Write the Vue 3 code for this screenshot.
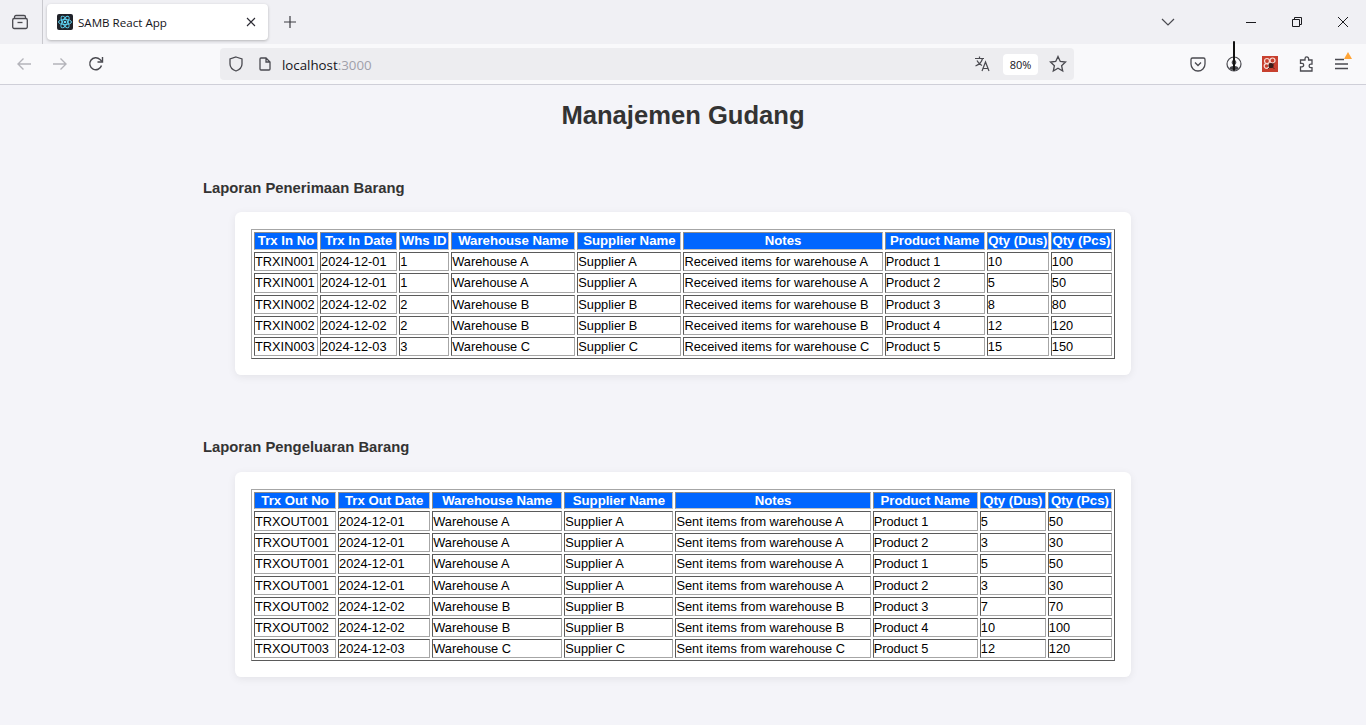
<template>
  <div class="browser">
    <div class="tabbar">
      <div class="tab-view">
        <svg width="18" height="18" viewBox="0 0 18 18" fill="none" stroke="#4a4a50" stroke-width="1.300">
          <path d="M3.500 5.500V4A1.500 1.500 0 0 1 5 2.500h8A1.500 1.500 0 0 1 14.500 4v1.500" />
          <path d="M1.700 7A1.500 1.500 0 0 1 3.200 5.500h11.600A1.500 1.500 0 0 1 16.300 7v7a1.500 1.500 0 0 1-1.500 1.500H3.200A1.500 1.500 0 0 1 1.700 14z" />
          <path d="M6.500 9.500h5" />
        </svg>
      </div>
      <div class="tab">
        <svg class="favicon" width="16" height="16" viewBox="0 0 16 16">
          <rect width="16" height="16" rx="2" fill="#20232a" />
          <g fill="none" stroke="#61dafb" stroke-width="0.9">
            <ellipse cx="8" cy="8" rx="6.500" ry="2.600" />
            <ellipse cx="8" cy="8" rx="6.500" ry="2.600" transform="rotate(60 8 8)" />
            <ellipse cx="8" cy="8" rx="6.500" ry="2.600" transform="rotate(120 8 8)" />
          </g>
          <circle cx="8" cy="8" r="1.300" fill="#61dafb" />
        </svg>
        <span class="tab-title">SAMB React App</span>
        <svg class="tab-close" width="10" height="10" viewBox="0 0 10 10" stroke="#2b2a33" stroke-width="1.100">
          <path d="M1 1l8 8M9 1l-8 8" />
        </svg>
      </div>
      <svg class="new-tab" width="14" height="14" viewBox="0 0 14 14" stroke="#3d3d42" stroke-width="1.200">
        <path d="M7 1v12M1 7h12" />
      </svg>
      <div class="spacer"></div>
      <svg class="tab-list" width="14" height="8" viewBox="0 0 14 8" fill="none" stroke="#4a4a50" stroke-width="1.200">
        <path d="M1 1l6 6 6-6" />
      </svg>
      <div class="win-btn">
        <svg width="10" height="10" viewBox="0 0 10 10" stroke="#1b1b1f" stroke-width="1"><path d="M0 5.500h10" /></svg>
      </div>
      <div class="win-btn">
        <svg width="10" height="10" viewBox="0 0 10 10" fill="none" stroke="#1b1b1f" stroke-width="1">
          <path d="M0.500 2.500h7v7h-7zM2.500 2.500v-2h7v7h-2" />
        </svg>
      </div>
      <div class="win-btn">
        <svg width="10" height="10" viewBox="0 0 10 10" stroke="#1b1b1f" stroke-width="1"><path d="M0 0l10 10M10 0L0 10" /></svg>
      </div>
    </div>

    <div class="toolbar">
      <div class="nav-btns">
        <svg width="16" height="16" viewBox="0 0 16 16" fill="none" stroke="#b4b4ba" stroke-width="1.400">
          <path d="M15 8H2M7.500 2.500L2 8l5.500 5.500" />
        </svg>
        <svg width="16" height="16" viewBox="0 0 16 16" fill="none" stroke="#b4b4ba" stroke-width="1.400">
          <path d="M1 8h13M8.500 2.500L14 8l-5.500 5.500" />
        </svg>
        <svg width="16" height="16" viewBox="0 0 16 16" fill="none" stroke="#4a4a50" stroke-width="1.400">
          <path d="M13.500 9.500A6 6 0 1 1 12 3.500l2 2" />
          <path d="M14.500 1v5h-5" />
        </svg>
      </div>
      <div class="urlbar">
        <svg width="16" height="16" viewBox="0 0 16 16" fill="none" stroke="#4a4a50" stroke-width="1.300">
          <path d="M8 1l6 2v5c0 3.500-2.500 5.700-6 7-3.500-1.300-6-3.500-6-7V3z" />
        </svg>
        <svg class="page-icon" width="14" height="14" viewBox="0 0 14 14" fill="none" stroke="#4a4a50" stroke-width="1.300">
          <path d="M2 2a1 1 0 0 1 1-1h5l4 4v7a1 1 0 0 1-1 1H3a1 1 0 0 1-1-1zM8 1v4h4" />
        </svg>
        <span class="url"><span class="host">localhost</span><span class="port">:3000</span></span>
        <span class="spacer"></span>
        <span class="translate">
          <svg width="18" height="18" viewBox="0 0 18 18" fill="none" stroke="#4a4a50" stroke-width="1.200">
            <path d="M1 3.500h9M5.500 1.500v2M8.500 3.500c-.8 3.500-3 6-7 7.500M3 5.500c1 2.500 3 4 5 5M8 16l3.500-9 3.500 9M9.200 13.500h4.600" />
          </svg>
        </span>
        <span class="zoom-badge">80%</span>
        <svg width="18" height="18" viewBox="0 0 18 18" fill="none" stroke="#4a4a50" stroke-width="1.300">
          <path d="M9 1.500l2.300 5 5.200.6-3.900 3.600 1.100 5.300L9 13.300 4.300 16l1.100-5.300L1.500 7.100l5.200-.6z" />
        </svg>
      </div>
      <div class="spacer"></div>
      <div class="ext-icons">
        <svg width="16" height="16" viewBox="0 0 16 16" fill="none" stroke="#4a4a50" stroke-width="1.300">
          <path d="M2.500 2h11A1.500 1.500 0 0 1 15 3.500V8a7 7 0 0 1-14 0V3.500A1.500 1.500 0 0 1 2.500 2z" />
          <path d="M5 6.500l3 3 3-3" />
        </svg>
        <span class="ext-account">
          <svg width="16" height="16" viewBox="0 0 16 16" fill="none" stroke="#4a4a50" stroke-width="1.200">
            <circle cx="8" cy="8" r="7" />
            <path d="M4 12.500c.8-2.600 7.200-2.600 8 0-1.800 1.300-6.200 1.300-8 0z" fill="#3a3a40" />
            <circle cx="8" cy="6.500" r="1.800" fill="#4a4a50" />
          </svg>
          <i class="cursor-stem"></i>
        </span>
        <svg width="16" height="16" viewBox="0 0 16 16">
          <rect width="16" height="16" fill="#c8402f" />
          <g fill="none" stroke="#f7dcd5" stroke-width="1.200">
            <circle cx="5" cy="5" r="2.500" />
            <circle cx="10.500" cy="4.500" r="2.500" />
            <circle cx="4.500" cy="10" r="2.300" />
          </g>
          <circle cx="9" cy="9.500" r="2.600" fill="#3a1d1a" />
          <path d="M6 13l2-2M12.500 13l-2-2M12.500 7l-2 1.500" stroke="#3a1d1a" stroke-width="0.800" />
        </svg>
        <svg width="16" height="16" viewBox="0 0 16 16" fill="none" stroke="#4a4a50" stroke-width="1.300">
          <path d="M7 4V2.700a1.800 1.800 0 0 1 3.600 0V4H14v4.200h-1.200a1.700 1.700 0 0 0 0 3.400H14V15H2.500v-4.200H4a1.700 1.700 0 0 0 0-3.400H2.500V4z" />
        </svg>
        <span class="menu-btn">
          <svg width="16" height="12" viewBox="0 0 16 12" stroke="#4a4a50" stroke-width="1.300">
            <path d="M1 1.500h9M1 6h13M1 10.500h13" />
          </svg>
          <i class="menu-dot"></i>
        </span>
      </div>
    </div>

    <main class="page">
      <h1>Manajemen Gudang</h1>

      <section class="report">
        <h2>Laporan Penerimaan Barang</h2>
        <div class="card">
          <table>
            <colgroup>
              <col v-for="(w, i) in inWidths" :key="i" :style="{ width: w + 'px' }" />
            </colgroup>
            <thead>
              <tr>
                <th v-for="h in inHeaders" :key="h">{{ h }}</th>
              </tr>
            </thead>
            <tbody>
              <tr v-for="(row, i) in inRows" :key="i">
                <td v-for="(cell, j) in row" :key="j">{{ cell }}</td>
              </tr>
            </tbody>
          </table>
        </div>
      </section>

      <section class="report">
        <h2>Laporan Pengeluaran Barang</h2>
        <div class="card">
          <table>
            <colgroup>
              <col v-for="(w, i) in outWidths" :key="i" :style="{ width: w + 'px' }" />
            </colgroup>
            <thead>
              <tr>
                <th v-for="h in outHeaders" :key="h">{{ h }}</th>
              </tr>
            </thead>
            <tbody>
              <tr v-for="(row, i) in outRows" :key="i">
                <td v-for="(cell, j) in row" :key="j">{{ cell }}</td>
              </tr>
            </tbody>
          </table>
        </div>
      </section>
    </main>
  </div>
</template>

<script setup>
const inHeaders = [
  "Trx In No",
  "Trx In Date",
  "Whs ID",
  "Warehouse Name",
  "Supplier Name",
  "Notes",
  "Product Name",
  "Qty (Dus)",
  "Qty (Pcs)",
];

const inWidths = [64, 77, 50, 124, 104, 199, 100, 62, 61];

const inRows = [
  ["TRXIN001", "2024-12-01", 1, "Warehouse A", "Supplier A", "Received items for warehouse A", "Product 1", 10, 100],
  ["TRXIN001", "2024-12-01", 1, "Warehouse A", "Supplier A", "Received items for warehouse A", "Product 2", 5, 50],
  ["TRXIN002", "2024-12-02", 2, "Warehouse B", "Supplier B", "Received items for warehouse B", "Product 3", 8, 80],
  ["TRXIN002", "2024-12-02", 2, "Warehouse B", "Supplier B", "Received items for warehouse B", "Product 4", 12, 120],
  ["TRXIN003", "2024-12-03", 3, "Warehouse C", "Supplier C", "Received items for warehouse C", "Product 5", 15, 150],
];

const outHeaders = [
  "Trx Out No",
  "Trx Out Date",
  "Warehouse Name",
  "Supplier Name",
  "Notes",
  "Product Name",
  "Qty (Dus)",
  "Qty (Pcs)",
];

const outWidths = [82, 92, 130, 109, 195, 105, 66, 64];

const outRows = [
  ["TRXOUT001", "2024-12-01", "Warehouse A", "Supplier A", "Sent items from warehouse A", "Product 1", 5, 50],
  ["TRXOUT001", "2024-12-01", "Warehouse A", "Supplier A", "Sent items from warehouse A", "Product 2", 3, 30],
  ["TRXOUT001", "2024-12-01", "Warehouse A", "Supplier A", "Sent items from warehouse A", "Product 1", 5, 50],
  ["TRXOUT001", "2024-12-01", "Warehouse A", "Supplier A", "Sent items from warehouse A", "Product 2", 3, 30],
  ["TRXOUT002", "2024-12-02", "Warehouse B", "Supplier B", "Sent items from warehouse B", "Product 3", 7, 70],
  ["TRXOUT002", "2024-12-02", "Warehouse B", "Supplier B", "Sent items from warehouse B", "Product 4", 10, 100],
  ["TRXOUT003", "2024-12-03", "Warehouse C", "Supplier C", "Sent items from warehouse C", "Product 5", 12, 120],
];
</script>

<style>
html,
body {
  margin: 0;
  background: #f4f4f9;
}
</style>

<style scoped>
.browser {
  width: 1366px;
  height: 725px;
  overflow: hidden;
  font-family: "Liberation Sans", Arial, sans-serif;
  background: #f4f4f9;
}

.spacer {
  flex: 1;
}

.tabbar {
  height: 44px;
  display: flex;
  align-items: center;
  background: #f0f0f4;
}

.tab-view {
  width: 43px;
  height: 44px;
  box-sizing: border-box;
  display: flex;
  align-items: center;
  justify-content: center;
  border-right: 1px solid #c9c9ce;
  padding-right: 3px;
}

.tab {
  margin-left: 4px;
  width: 221px;
  height: 36px;
  box-sizing: border-box;
  background: #fff;
  border-radius: 4px;
  box-shadow: 0 1px 3px rgba(0, 0, 0, 0.25);
  display: flex;
  align-items: center;
  padding: 0 12px 0 10px;
}

.favicon {
  flex: none;
}

.tab-title {
  flex: 1;
  margin-left: 5px;
  font-family: "Open Sans", sans-serif;
  font-size: 11.600px;
  color: #15141a;
}

.new-tab {
  margin-left: 15px;
}

.tab-list {
  margin-right: 53px;
}

.win-btn {
  width: 46px;
  display: flex;
  justify-content: center;
}

.toolbar {
  height: 40px;
  display: flex;
  align-items: center;
  background: #f9f9fb;
  border-bottom: 1px solid #cfcfd8;
}

.nav-btns {
  width: 220px;
  box-sizing: border-box;
  padding-left: 16px;
  display: flex;
  align-items: center;
  gap: 20px;
}

.urlbar {
  width: 854px;
  height: 32px;
  box-sizing: border-box;
  background: #ededf0;
  border-radius: 4px;
  display: flex;
  align-items: center;
  padding: 0 7px 0 8px;
}

.page-icon {
  margin-left: 14px;
}

.url {
  margin-left: 10px;
  padding-top: 1px;
  font-family: "Open Sans", sans-serif;
  font-size: 13.300px;
}

.host {
  color: #15141a;
}

.port {
  color: #a0a0aa;
}

.translate {
  display: flex;
  margin-right: 11px;
}

.zoom-badge {
  width: 35px;
  height: 21px;
  margin-right: 11px;
  border-radius: 4px;
  background: #fff;
  font-family: "Open Sans", sans-serif;
  font-size: 11px;
  line-height: 21px;
  text-align: center;
  color: #15141a;
}

.ext-icons {
  display: flex;
  align-items: center;
  gap: 20px;
  padding-right: 16px;
}

.ext-account {
  position: relative;
  display: flex;
}

.cursor-stem {
  position: absolute;
  left: 6.500px;
  top: -15px;
  width: 2px;
  height: 30px;
  border-radius: 1px;
  background: #111;
}

.menu-btn {
  position: relative;
  display: flex;
}

.menu-dot {
  position: absolute;
  right: -2px;
  top: -6px;
  width: 0;
  height: 0;
  border-left: 4px solid transparent;
  border-right: 4px solid transparent;
  border-bottom: 7px solid #ffa436;
}

.page {
  color: #333;
}

h1 {
  margin: 0;
  padding-top: 15px;
  height: 46px;
  font-size: 25.600px;
  line-height: 30px;
  text-align: center;
}

.report {
  margin: 0 203px;
}

h2 {
  margin: 0;
  font-size: 14.800px;
  line-height: 17px;
}

.report:nth-of-type(1) h2 {
  padding-top: 34px;
}

.report:nth-of-type(2) h2 {
  padding-top: 64px;
}

.card {
  margin: 15px 32px 0;
  padding: 17px 16px 16px;
  background: #fff;
  border-radius: 6.400px;
  box-shadow: 0 2px 8px rgba(0, 0, 0, 0.07);
}

.report:nth-of-type(2) .card {
  margin-top: 16px;
}

table {
  width: 100%;
  table-layout: fixed;
  border-collapse: separate;
  border-spacing: 2px;
  border: 1px solid;
  border-color: #a6a6a6 #5a5a5a #5a5a5a #a6a6a6;
  font-size: 12.800px;
  color: #000;
}

th {
  background: #0066ff;
  color: #fff;
  padding: 0;
  height: 17.500px;
  font-size: 13.200px;
  line-height: 15px;
  text-align: center;
  white-space: nowrap;
  border: 1px solid;
  border-color: #8c8c8c #c0c0c0 #c0c0c0 #8c8c8c;
  box-sizing: border-box;
}

td {
  padding: 0;
  height: 19.100px;
  line-height: 15px;
  white-space: nowrap;
  border: 1px solid;
  border-color: #5a5a5a #a6a6a6 #a6a6a6 #5a5a5a;
  box-sizing: border-box;
}

.report:nth-of-type(1) tbody tr:nth-child(2) td,
.report:nth-of-type(2) tbody tr:nth-child(3) td {
  height: 20.100px;
}
</style>
